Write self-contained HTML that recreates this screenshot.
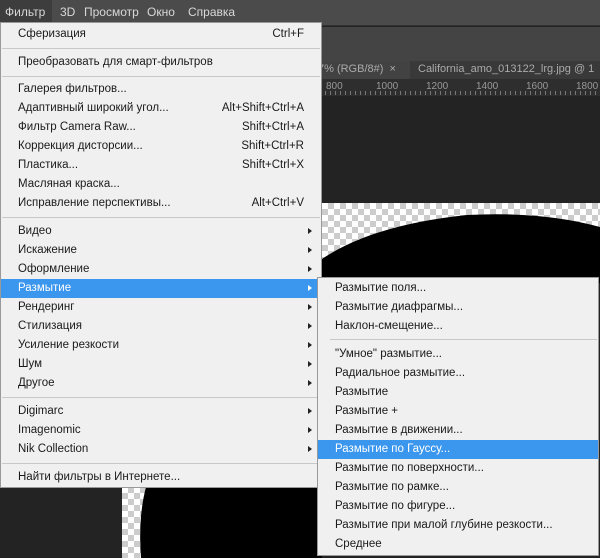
<!DOCTYPE html>
<html><head><meta charset="utf-8"><style>
*{margin:0;padding:0;box-sizing:border-box}
body{width:600px;height:558px;overflow:hidden;background:#232323;position:relative;font-family:"Liberation Sans","DejaVu Sans",sans-serif;font-size:11.5px}
.abs{position:absolute}
.menubar{left:0;top:0;width:600px;height:26px;background:#4b4b4b;border-bottom:1px solid #333}
.menubar span{position:absolute;top:5px;color:#d8d8d8;font-size:12px}
.opt{left:0;top:27px;width:600px;height:34px;background:#444}
.tabs{left:0;top:61px;width:600px;height:18px;background:#393939}
.ruler{left:0;top:79px;width:600px;height:17px;background:#2e2e2e}
.ruler span{position:absolute;top:2px;color:#999;font-size:10px}
.chk{background-color:#fff;background-image:linear-gradient(45deg,#ccc 25%,transparent 25%,transparent 75%,#ccc 75%),linear-gradient(45deg,#ccc 25%,transparent 25%,transparent 75%,#ccc 75%);background-size:12px 12px;background-position:0 0,6px 6px}
.menu{background:#f0f0f0;border:1px solid #999;color:#1a1a1a}
.it{position:absolute;left:0;right:0;height:19px;line-height:19px;padding-left:17px;white-space:nowrap}
.it .k{position:absolute;right:17px;top:0}
.it .a{position:absolute;right:9px;top:6px;width:0;height:0;border-left:4px solid #222;border-top:3.5px solid transparent;border-bottom:3.5px solid transparent}
.hl{background:#3b96ee;color:#fff}
.hl .a{border-left-color:#fff}
.sep{position:absolute;left:1px;right:1px;height:1px;background:#c8c8c8}
</style></head><body>
<div class="abs menubar">
<div class="abs" style="left:0;top:0;width:52px;height:26px;background:#3d3d3d"></div>
<span style="left:5px">Фильтр</span><span style="left:60px">3D</span><span style="left:84px">Просмотр</span><span style="left:147px">Окно</span><span style="left:188px">Справка</span>
</div>
<div class="abs opt"></div>
<div class="abs tabs">
<div class="abs" style="left:300px;top:0;width:110px;height:18px;background:#424242"></div>
<span class="abs" style="left:318px;top:2px;color:#aaa;font-size:11px">7% (RGB/8#) &nbsp;×</span>
<span class="abs" style="left:418px;top:2px;color:#aaa;font-size:11px;white-space:nowrap">California_amo_013122_lrg.jpg @ 1</span>
</div>
<div class="abs ruler">
<span style="left:326px">800</span><span style="left:376px">1000</span><span style="left:426px">1200</span><span style="left:476px">1400</span><span style="left:526px">1600</span><span style="left:576px">1800</span>
<div class="abs" style="left:320px;top:12px;width:280px;height:4px;background:repeating-linear-gradient(90deg,#777 0 1px,transparent 1px 5px)"></div>
</div>
<div class="abs chk" style="left:322px;top:203px;width:278px;height:80px"></div>
<svg class="abs" style="left:322px;top:203px" width="278" height="80"><path d="M0 56 Q50 22 145 12 Q220 8 278 24 L278 80 L0 80Z" fill="#000"/></svg>
<div class="abs chk" style="left:122px;top:487px;width:200px;height:71px"></div>
<svg class="abs" style="left:122px;top:487px" width="200" height="71"><path d="M24 0 Q16 30 19 71 L200 71 L200 0Z" fill="#000"/></svg>

<div class="abs menu" style="left:0;top:22px;width:322px;height:466px">
<div class="it" style="top:2px">Сферизация<span class="k">Ctrl+F</span></div>
<div class="sep" style="top:25px"></div>
<div class="it" style="top:30px">Преобразовать для смарт-фильтров</div>
<div class="sep" style="top:53px"></div>
<div class="it" style="top:57px">Галерея фильтров...</div>
<div class="it" style="top:76px">Адаптивный широкий угол...<span class="k">Alt+Shift+Ctrl+A</span></div>
<div class="it" style="top:95px">Фильтр Camera Raw...<span class="k">Shift+Ctrl+A</span></div>
<div class="it" style="top:114px">Коррекция дисторсии...<span class="k">Shift+Ctrl+R</span></div>
<div class="it" style="top:133px">Пластика...<span class="k">Shift+Ctrl+X</span></div>
<div class="it" style="top:152px">Масляная краска...</div>
<div class="it" style="top:171px">Исправление перспективы...<span class="k">Alt+Ctrl+V</span></div>
<div class="sep" style="top:194px"></div>
<div class="it" style="top:199px">Видео<span class="a"></span></div>
<div class="it" style="top:218px">Искажение<span class="a"></span></div>
<div class="it" style="top:237px">Оформление<span class="a"></span></div>
<div class="it hl" style="top:256px">Размытие<span class="a"></span></div>
<div class="it" style="top:275px">Рендеринг<span class="a"></span></div>
<div class="it" style="top:294px">Стилизация<span class="a"></span></div>
<div class="it" style="top:313px">Усиление резкости<span class="a"></span></div>
<div class="it" style="top:332px">Шум<span class="a"></span></div>
<div class="it" style="top:351px">Другое<span class="a"></span></div>
<div class="sep" style="top:374px"></div>
<div class="it" style="top:379px">Digimarc<span class="a"></span></div>
<div class="it" style="top:398px">Imagenomic<span class="a"></span></div>
<div class="it" style="top:417px">Nik Collection<span class="a"></span></div>
<div class="sep" style="top:440px"></div>
<div class="it" style="top:445px">Найти фильтры в Интернете...</div>
</div>

<div class="abs menu" style="left:317px;top:277px;width:282px;height:279px">
<div class="it" style="top:1px">Размытие поля...</div>
<div class="it" style="top:20px">Размытие диафрагмы...</div>
<div class="it" style="top:39px">Наклон-смещение...</div>
<div class="sep" style="top:61px;left:12px"></div>
<div class="it" style="top:67px">"Умное" размытие...</div>
<div class="it" style="top:86px">Радиальное размытие...</div>
<div class="it" style="top:105px">Размытие</div>
<div class="it" style="top:124px">Размытие +</div>
<div class="it" style="top:143px">Размытие в движении...</div>
<div class="it hl" style="top:162px">Размытие по Гауссу...</div>
<div class="it" style="top:181px">Размытие по поверхности...</div>
<div class="it" style="top:200px">Размытие по рамке...</div>
<div class="it" style="top:219px">Размытие по фигуре...</div>
<div class="it" style="top:238px">Размытие при малой глубине резкости...</div>
<div class="it" style="top:257px">Среднее</div>
</div>
</body></html>
